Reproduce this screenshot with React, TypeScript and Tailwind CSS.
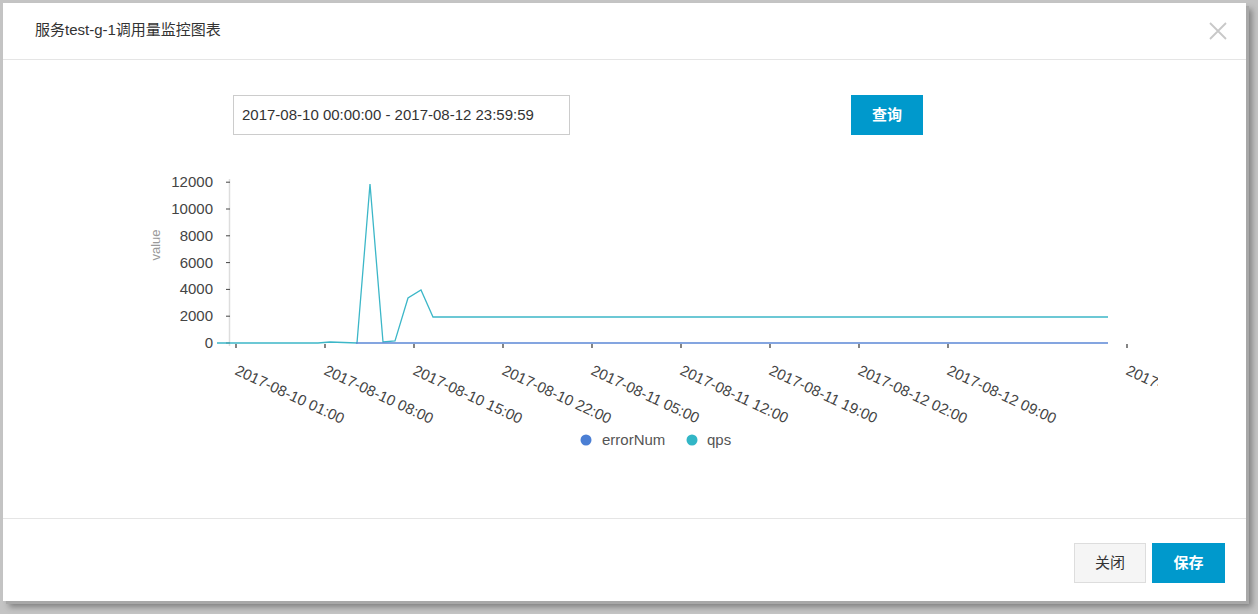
const qps: [number, number][] = [
  [217, 343], [318, 343], [330, 342], [357, 343], [370, 184], [383, 342],
  [395, 341], [408, 298], [421, 290], [433, 317], [1108, 317],
];

const yTicks = [0, 2000, 4000, 6000, 8000, 10000, 12000];
const xTicks = [
  [236, "2017-08-10 01:00"],
  [325, "2017-08-10 08:00"],
  [414, "2017-08-10 15:00"],
  [503, "2017-08-10 22:00"],
  [592, "2017-08-11 05:00"],
  [681, "2017-08-11 12:00"],
  [770, "2017-08-11 19:00"],
  [859, "2017-08-12 02:00"],
  [948, "2017-08-12 09:00"],
  [1127, "2017-08-12 16:00"],
] as const;

function Chart() {
  const y = (v: number) => 343 - (v / 2000) * 26.8;
  return (
    <svg
      width={1243}
      height={383}
      viewBox="3 135 1243 383"
      className="block"
      style={{ fontFamily: '"Liberation Sans", Arial, sans-serif' }}
    >
      <defs>
        <clipPath id="clip">
          <rect x={3} y={135} width={1155} height={383} />
        </clipPath>
      </defs>
      {/* y axis */}
      <line x1={229.5} y1={179} x2={229.5} y2={346} stroke="#dddddd" strokeWidth={1.5} />
      {yTicks.map((v) => (
        <g key={v}>
          <line x1={226} x2={230} y1={y(v)} y2={y(v)} stroke="#444" strokeWidth={1} />
          <text x={213} y={y(v) + 5} textAnchor="end" fontSize={15} fill="#444">
            {v}
          </text>
        </g>
      ))}
      <text
        x={160}
        y={245}
        fontSize={13}
        fill="#999"
        textAnchor="middle"
        transform="rotate(-90 160 245)"
      >
        value
      </text>

      {/* x ticks */}
      <g clipPath="url(#clip)">
        {xTicks.map(([x, label]) => (
          <g key={label}>
            <line x1={x} x2={x} y1={344} y2={348} stroke="#333" strokeWidth={1.2} />
            <text
              x={x - 2}
              y={374}
              fontSize={15}
              fill="#444"
              transform={`rotate(25 ${x - 2} 374)`}
            >
              {label}
            </text>
          </g>
        ))}
      </g>

      {/* series */}
      <polyline
        points={qps.map(([a, b]) => `${a},${b}`).join(" ")}
        fill="none"
        stroke="#3cb7c8"
        strokeWidth={1.3}
      />
      <line x1={356} x2={1108} y1={343} y2={343} stroke="#5b87d6" strokeWidth={1.6} />

      {/* legend */}
      <circle cx={586} cy={440} r={5.5} fill="#4b7fd4" />
      <text x={602} y={445} fontSize={15} fill="#555">
        errorNum
      </text>
      <circle cx={692} cy={440} r={5.5} fill="#32b6c6" />
      <text x={707} y={445} fontSize={15} fill="#555">
        qps
      </text>
    </svg>
  );
}

export default function App() {
  return (
    <div
      className="w-[1258px] h-[614px] bg-[#c4c4c4] pl-[3px] pt-[3px] overflow-hidden"
      style={{ fontFamily: '"Liberation Sans", "Noto Sans CJK SC", sans-serif' }}
    >
      <div className="w-[1243px] h-[598px] bg-white flex flex-col shadow-[3px_3px_0_#a8a8a8,6px_6px_6px_rgba(0,0,0,0.35)]">
        {/* Header */}
        <div className="h-[57px] shrink-0 border-b border-[#e5e5e5] flex items-center justify-between pl-[32px] pr-[19px]">
          <h2 className="text-[15px] text-[#333] pb-[1px]">服务test-g-1调用量监控图表</h2>
          <svg width="18" height="18" viewBox="0 0 18 18" className="mb-[1px]">
            <path d="M1 1L17 17M17 1L1 17" stroke="#c8c8c8" strokeWidth="1.8" />
          </svg>
        </div>

        {/* Body */}
        <div className="flex-1">
          <div className="flex pt-[35px] pl-[230px]">
            <div className="w-[337px] h-[40px] border border-[#cccccc] flex items-center pl-[8px] text-[15px] text-[#333]">
              2017-08-10 00:00:00 - 2017-08-12 23:59:59
            </div>
            <button className="ml-[281px] w-[72px] h-[40px] bg-[#0099cc] text-white text-[15px] font-bold">
              查询
            </button>
          </div>
          <Chart />
        </div>

        {/* Footer */}
        <div className="h-[83px] shrink-0 border-t border-[#e5e5e5] flex justify-end items-start gap-[6px] pt-[24px] pr-[21px]">
          <button className="w-[72px] h-[40px] bg-[#f5f5f5] border border-[#dddddd] text-[15px] text-[#333]">
            关闭
          </button>
          <button className="w-[73px] h-[40px] bg-[#0099cc] text-white text-[15px] font-bold">
            保存
          </button>
        </div>
      </div>
    </div>
  );
}
